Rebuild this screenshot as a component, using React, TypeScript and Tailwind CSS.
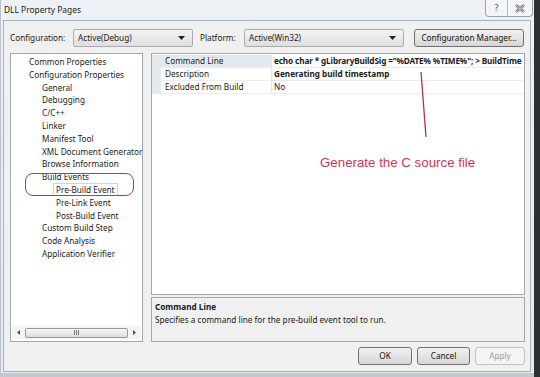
import React from "react";

const treeItems: [string, number][] = [
	["Common Properties", 0],
	["Configuration Properties", 0],
	["General", 1],
	["Debugging", 1],
	["C/C++", 1],
	["Linker", 1],
	["Manifest Tool", 1],
	["XML Document Generator", 1],
	["Browse Information", 1],
	["Build Events", 1],
	["Pre-Build Event", 2],
	["Pre-Link Event", 2],
	["Post-Build Event", 2],
	["Custom Build Step", 1],
	["Code Analysis", 1],
	["Application Verifier", 1],
];

function Combo({ value, className }: { value: string; className: string }) {
	return (
		<div className={`h-[18px] flex items-center justify-between border border-[#a9acb3] rounded-[2px] bg-gradient-to-b from-[#f4f4f4] to-[#dedede] pl-[4px] pr-[7px] ${className}`}>
			<span>{value}</span>
			<svg width="7" height="4" viewBox="0 0 7 4"><path d="M0 0h7L3.5 4z" fill="#222" /></svg>
		</div>
	);
}

function Btn({ label, className, disabled }: { label: string; className: string; disabled?: boolean }) {
	return (
		<div
			className={`h-[18px] flex items-center justify-center rounded-[3px] border ${
				disabled ? "border-[#c4c4c4] bg-[#f4f4f4] text-[#a0a0a0]" : "border-[#707070] bg-gradient-to-b from-[#f2f2f2] to-[#d6d6d6] text-[#111]"
			} ${className}`}
		>
			{label}
		</div>
	);
}

export default function App() {
	return (
		<div
			className="w-[540px] h-[377px] relative overflow-hidden bg-[#c3c8cf] flex text-[8.2px] text-[#1a1a1a]"
			style={{ fontFamily: '"Noto Sans", "Open Sans", sans-serif' }}
		>
			{/* Janela */}
			<div className="w-[534px] h-[373px] flex flex-col bg-gradient-to-b from-[#eef2f7] to-[#e4e9f0] border-l border-[#b9c2cc]">
				{/* Barra de título */}
				<div className="h-[20px] flex items-start justify-between pl-[3px]">
					<span className="mt-[4px] text-[8.4px] text-[#222]">DLL Property Pages</span>
					<div className="flex h-[17px] border border-t-0 border-[#9aa3ad] rounded-b-[4px] bg-[#f3f6f9] mr-[1px]">
						<div className="w-[22px] flex items-center justify-center border-r border-[#b5bcc4] text-[9px] text-[#555]">?</div>
						<div className="w-[24px] flex items-center justify-center">
							<svg width="10" height="9" viewBox="0 0 10 9">
								<path d="M1 1l8 7M9 1L1 8" stroke="#666" strokeWidth="2.4" />
								<path d="M1 1l8 7M9 1L1 8" stroke="#f3f6f9" strokeWidth="0.9" />
							</svg>
						</div>
					</div>
				</div>

				{/* Área cliente */}
				<div className="flex-1 ml-[2px] mr-[3px] mb-[1px] border border-[#aab2bc] bg-[#f0f0f0] pl-[6px] pr-[5px] pt-[8px] flex flex-col">
					<div className="h-[18px] flex items-center">
						<span className="w-[63px]">Configuration:</span>
						<Combo value="Active(Debug)" className="w-[120px]" />
						<span className="ml-[7px] w-[44px]">Platform:</span>
						<Combo value="Active(Win32)" className="w-[160px]" />
						<Btn label="Configuration Manager..." className="ml-[10px] w-[110px]" />
					</div>

					<div className="mt-[6px] flex gap-[8px] h-[289px]">
						{/* Árvore */}
						<div className="w-[133px] border border-[#a4a8b0] bg-white flex flex-col">
							<div className="flex-1 pt-[2px] pl-[18px]">
								{treeItems.map(([label, level]) => (
									<div key={label} className={`h-[12.8px] leading-[12.8px] whitespace-nowrap ${level === 1 ? "pl-[13px]" : level === 2 ? "pl-[27px]" : ""}`}>
										<span className={label === "Pre-Build Event" ? "border border-[#d4d4d4] px-[2px] -ml-[3px]" : ""}>{label}</span>
									</div>
								))}
							</div>
							<div className="h-[13px] mx-[1px] mb-[2px] flex items-center bg-[#f4f4f4]">
								<div className="w-[13px] flex justify-center">
									<svg width="3" height="5" viewBox="0 0 3 5"><path d="M3 0v5L0 2.5z" fill="#555" /></svg>
								</div>
								<div className="flex-1 h-[10px] border border-[#9a9a9a] rounded-[2px] bg-gradient-to-b from-[#f7f7f7] to-[#dcdcdc] flex items-center justify-center">
									<svg width="6" height="5" viewBox="0 0 6 5"><path d="M0.5 0v5M2.5 0v5M4.5 0v5" stroke="#777" /></svg>
								</div>
								<div className="w-[13px] flex justify-center">
									<svg width="3" height="5" viewBox="0 0 3 5"><path d="M0 0v5l3-2.5z" fill="#555" /></svg>
								</div>
							</div>
						</div>

						{/* Grade + descrição */}
						<div className="w-[374px] flex flex-col">
							<div className="h-[242px] border border-[#a4a8b0] bg-white pt-[1px]">
								{[
									["Command Line", 'echo char * gLibraryBuildSig ="%DATE% %TIME%"; > BuildTime', true],
									["Description", "Generating build timestamp", true],
									["Excluded From Build", "No", false],
								].map(([name, value, bold], i) => (
									<div key={name as string} className="flex h-[13px] border-b border-[#ececec]">
										<div className="w-[9px] bg-[#e3e8ee]" />
										<div className={`w-[111px] pl-[4px] leading-[12px] border-r border-[#e4e4e4] ${i === 0 ? "bg-[#e3e8ee]" : ""}`}>{name as string}</div>
										<div className={`flex-1 pl-[2px] leading-[12px] whitespace-nowrap overflow-hidden ${bold ? "font-bold" : ""} ${i === 0 ? "tracking-[-0.12px]" : ""}`}>{value as string}</div>
									</div>
								))}
							</div>
							<div className="mt-[2px] h-[45px] border border-[#a4a8b0] bg-[#f0f0f0] px-[3px] pt-[2px]">
								<div className="font-bold leading-[13px]">Command Line</div>
								<div className="leading-[14px]">Specifies a command line for the pre-build event tool to run.</div>
							</div>
						</div>
					</div>

					<div className="mt-[5px] flex justify-end gap-[5px] pr-[0px]">
						<Btn label="OK" className="w-[54px]" />
						<Btn label="Cancel" className="w-[53px]" />
						<Btn label="Apply" className="w-[50px]" disabled />
					</div>
				</div>
			</div>
			<div className="flex-1 bg-[#2e2f31]" />

			{/* Anotações em vermelho */}
			<div className="absolute left-[25px] top-[173px] w-[109px] h-[23px] border border-[#c4334a] rounded-[8px]" />
			<svg className="absolute left-0 top-0" width="540" height="377">
				<path d="M421 72L426 137" stroke="#b82f4a" strokeWidth="1.3" />
			</svg>
			<div
				className="absolute left-[320px] top-[153px] text-[13.3px] text-[#d1345a]"
				style={{ fontFamily: '"Liberation Sans", Arial, sans-serif' }}
			>
				Generate the C source file
			</div>
		</div>
	);
}
